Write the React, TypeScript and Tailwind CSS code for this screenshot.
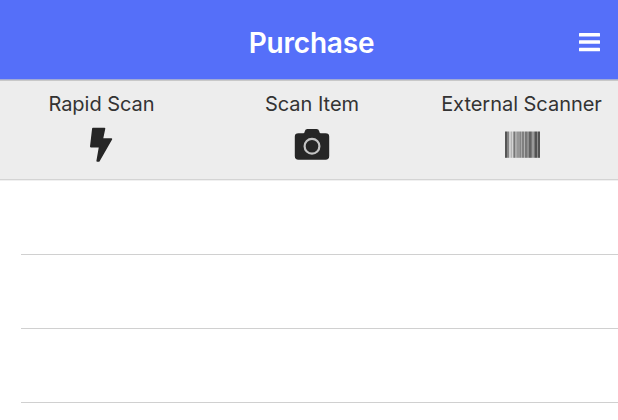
import React from "react";

const bars: [number, number, string][] = [
  [505, 2, "#555"], [507, 2, "#858585"], [509, 2, "#cdcdcd"], [511, 1, "#b4b4b4"],
  [512, 1, "#d4d4d4"], [513, 1, "#999"], [514, 1, "#777"], [515, 2, "#aaa"],
  [517, 3, "#979797"], [520, 1, "#858585"], [521, 1, "#aaa"], [522, 2, "#808080"],
  [524, 1, "#b0b0b0"], [525, 2, "#777"], [527, 2, "#8e8e8e"], [529, 2, "#626262"],
  [531, 1, "#777"], [532, 2, "#999"], [534, 1, "#777"], [535, 2, "#525252"],
  [537, 1, "#8c8c8c"], [538, 2, "#525252"],
];

function Bolt() {
  return (
    <svg width="24" height="36" viewBox="0 0 24 36" fill="#262626" stroke="#262626" strokeWidth="1.6" strokeLinejoin="round">
      <path d="M2.9 1.5H14.5L12.3 12H21.4L8.8 34H7.2L9.7 19.6H.8Z" />
    </svg>
  );
}

function Camera() {
  return (
    <svg width="36" height="36" viewBox="0 0 36 36">
      <path d="M4.5 6.2H9.5Q10.5 6 10.8 4.2Q11.3 2 13.5 2H22.5Q24.7 2 25.2 4.2Q25.5 6 26.5 6.2H31.5Q35.2 6.2 35.2 9.5V29Q35.2 32.8 31.5 32.8H4.5Q.8 32.8.8 29V9.5Q.8 6.2 4.5 6.2Z" fill="#262626" />
      <circle cx="18" cy="19.3" r="7.4" fill="none" stroke="#c4c4c4" strokeWidth="2.2" />
    </svg>
  );
}

function Barcode() {
  return (
    <svg width="35" height="36" viewBox="505 0 35 36">
      {bars.map(([x, w, fill]) => (
        <rect key={x} x={x} y="4.5" width={w} height="26.3" fill={fill} />
      ))}
    </svg>
  );
}

function Action({ label, children, className, labelClass = "" }: { label: string; children: React.ReactNode; className: string; labelClass?: string }) {
  return (
    <button className={`flex h-full shrink-0 flex-col items-center pt-[10px] ${className}`}>
      <span className={`whitespace-nowrap text-[20px] leading-[26px] tracking-[-0.03px] text-[#333] ${labelClass}`}>{label}</span>
      <span className="mt-[10px] flex h-9 items-center">{children}</span>
    </button>
  );
}

export default function App() {
  return (
    <div className="h-[420px] w-[618px] overflow-hidden bg-white font-['Inter','Liberation_Sans',sans-serif]">
      <header className="grid h-20 grid-cols-[1fr_auto_1fr] items-center border-b border-[#a2aad6] bg-[#556ff9] pt-[5px]">
        <h1 className="col-start-2 ml-[5px] pt-[2px] text-[28px] leading-9 font-[560] tracking-[-0.2px] text-white">Purchase</h1>
        <button aria-label="Menu" className="mr-[18px] justify-self-end">
          <svg width="21" height="20" viewBox="0 0 21 20" fill="#fff">
            <rect y="1" width="21" height="3.5" rx=".5" />
            <rect y="8.3" width="21" height="3.5" rx=".5" />
            <rect y="15.7" width="21" height="3.5" rx=".5" />
          </svg>
        </button>
      </header>
      <nav className="flex h-[100px] border-t border-b border-t-[#c8c8c8] border-b-[#d4d4d4] bg-[#ededed]">
        <Action label="Rapid Scan" className="w-[203px]"><Bolt /></Action>
        <Action label="Scan Item" className="w-[218px]"><Camera /></Action>
        <Action label="External Scanner" className="w-[203px]" labelClass="mr-[2px]"><Barcode /></Action>
      </nav>
      <main className="border-t border-[#f0f0f0]">
        <div className="ml-[21px] h-[74px] border-b border-[#d0d0d0]" />
        <div className="ml-[21px] h-[74px] border-b border-[#d0d0d0]" />
        <div className="ml-[21px] h-[74px] border-b border-[#d0d0d0]" />
      </main>
    </div>
  );
}
